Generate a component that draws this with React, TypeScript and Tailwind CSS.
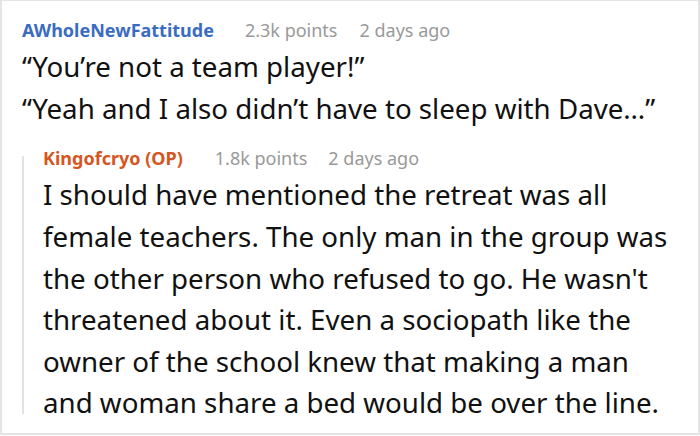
export default function App() {
  return (
    <div className="w-[700px] h-[436px] bg-white overflow-hidden" style={{ fontFamily: '"Noto Sans", sans-serif' }}>
      <div className="w-[700px] h-[435px] border-t border-l-2 border-r-2 border-b-2 border-[#e4e4e4] pl-[20px] pt-[17px]">
        <div className="flex items-baseline text-[18px] leading-[24px]">
          <span className="font-bold text-[#3a6cc0]">AWholeNewFattitude</span>
          <span className="ml-[31px] text-[#999]">2.3k points</span>
          <span className="ml-[22px] text-[#999]">2 days ago</span>
        </div>
        <div className="text-[27.7px] leading-[41.7px] text-[#111] mt-[4px] whitespace-nowrap">
          <p>“You’re not a team player!”</p>
          <p>“Yeah and I also didn’t have to sleep with Dave…”</p>
        </div>
        <div className="mt-[17px] flex">
          <div className="w-[2px] bg-[#e2e2e2] mt-[10px] mb-[10px]" />
          <div className="pl-[19px]">
            <div className="flex items-baseline text-[18px] leading-[24px]">
              <span className="font-bold text-[#d6561f]">Kingofcryo (OP)</span>
              <span className="ml-[32px] text-[#999]">1.8k points</span>
              <span className="ml-[21px] text-[#999]">2 days ago</span>
            </div>
            <p className="mt-[4px] text-[27.7px] leading-[41.6px] text-[#111] whitespace-nowrap">
              I should have mentioned the retreat was all<br />
              female teachers. The only man in the group was<br />
              the other person who refused to go. He wasn't<br />
              threatened about it. Even a sociopath like the<br />
              owner of the school knew that making a man<br />
              and woman share a bed would be over the line.
            </p>
          </div>
        </div>
      </div>
    </div>
  );
}
